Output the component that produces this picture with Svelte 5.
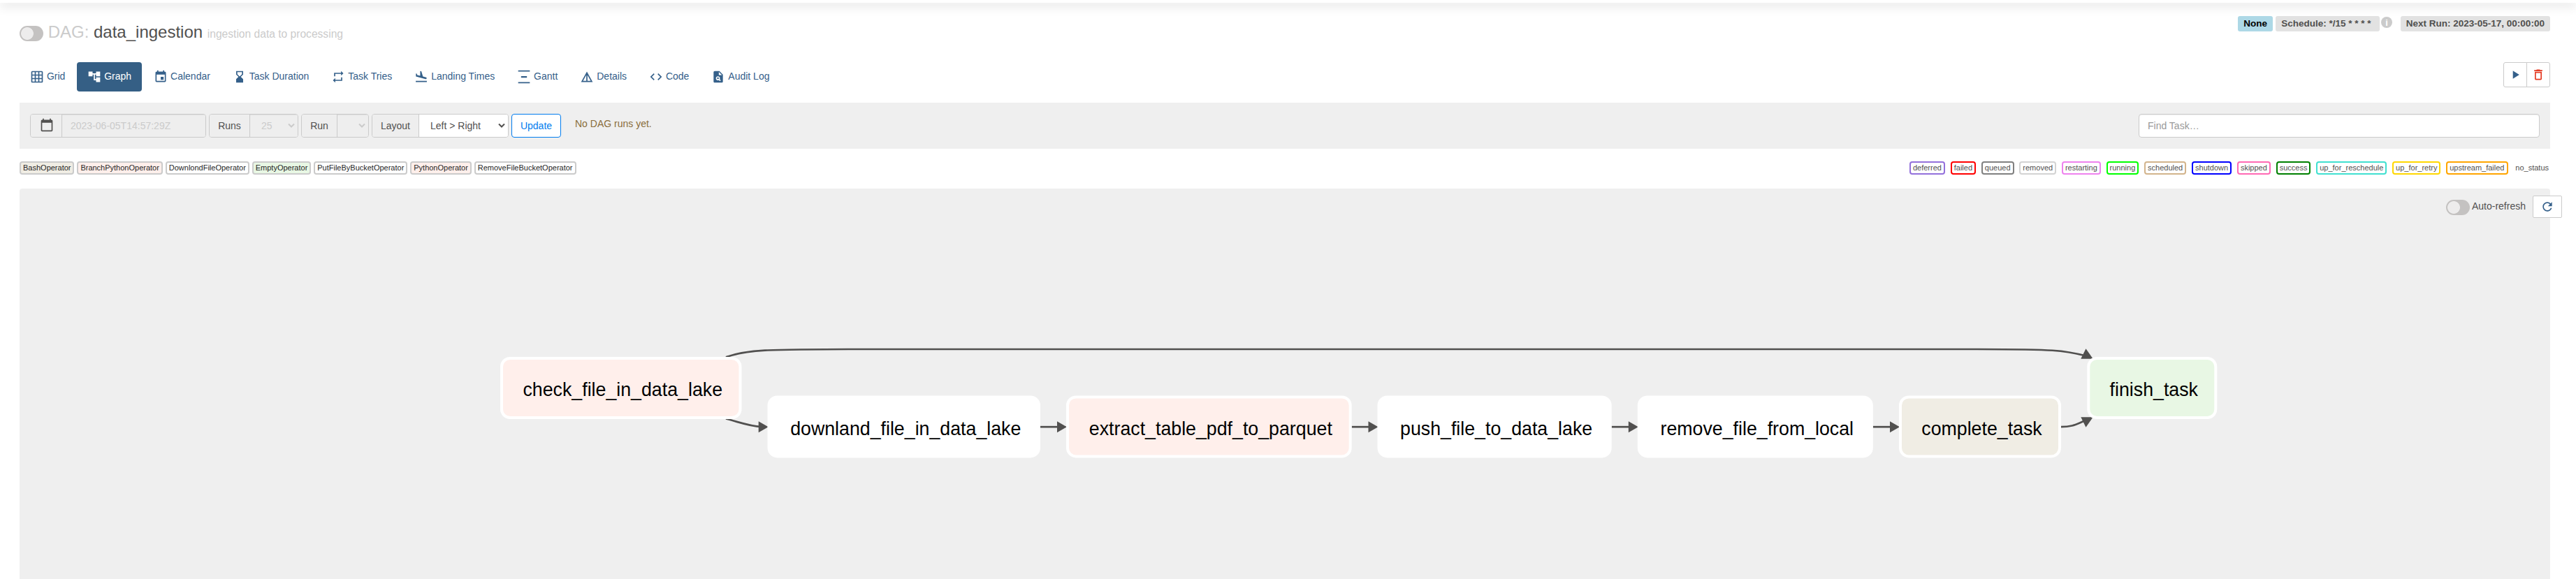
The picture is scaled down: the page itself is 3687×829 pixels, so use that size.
<script>
  const tabs = [
    { label: 'Grid', icon: 'M20 2H4c-1.1 0-2 .9-2 2v16c0 1.1.9 2 2 2h16c1.1 0 2-.9 2-2V4c0-1.1-.9-2-2-2zM8 20H4v-4h4v4zm0-6H4v-4h4v4zm0-6H4V4h4v4zm6 12h-4v-4h4v4zm0-6h-4v-4h4v4zm0-6h-4V4h4v4zm6 12h-4v-4h4v4zm0-6h-4v-4h4v4zm0-6h-4V4h4v4z' },
    { label: 'Graph', active: true, icon: 'M22 11V3h-7v3H9V3H2v8h7V8h2v10h4v3h7v-8h-7v3h-2V8h2v3z' },
    { label: 'Calendar', icon: 'M17 12h-5v5h5v-5zM16 1v2H8V1H6v2H5c-1.11 0-1.99.9-1.99 2L3 19c0 1.1.89 2 2 2h14c1.1 0 2-.9 2-2V5c0-1.1-.9-2-2-2h-1V1h-2zm3 18H5V8h14v11z' },
    { label: 'Task Duration', icon: 'M18 22l-.01-6L14 12l3.99-4.01L18 2H6v6l4 4-4 3.99V22h12zM8 7.5V4h8v3.5l-4 4-4-4z' },
    { label: 'Task Tries', icon: 'M7 7h10v3l4-4-4-4v3H5v6h2V7zm10 10H7v-3l-4 4 4 4v-3h12v-6h-2v4z' },
    { label: 'Landing Times', icon: 'M2.5 19h19v2h-19zm16.84-3.15c.8.21 1.62-.26 1.84-1.06.21-.8-.26-1.62-1.06-1.84l-5.31-1.42-2.76-9.02L10.12 2v8.28L5.15 8.95l-.93-2.32-1.45-.39v5.17l16.57 4.44z' },
    { label: 'Gantt', icon: 'M2 1h20v2H2zM7 10.7h10v2.8H7zM2 21h20v2H2z' },
    { label: 'Details', icon: 'M12 3L2 21h20L12 3zm1 5.92L18.6 19H13V8.92zm-2 0V19H5.4L11 8.92z' },
    { label: 'Code', icon: 'M9.4 16.6L4.8 12l4.6-4.6L8 6l-6 6 6 6 1.4-1.4zm5.2 0l4.6-4.6-4.6-4.6L16 6l6 6-6 6-1.4-1.4z' },
    { label: 'Audit Log', icon: 'M14 2H6c-1.1 0-1.99.9-1.99 2L4 20c0 1.1.89 2 1.99 2H18c1.1 0 2-.9 2-2V8l-6-6zm1.04 17.45l-1.88-1.88c-1.33.71-3.01.53-4.13-.59-1.37-1.37-1.37-3.58 0-4.95 1.37-1.37 3.58-1.37 4.95 0 1.12 1.12 1.31 2.8.59 4.13l1.88 1.88-1.41 1.41zM13 9V3.5L18.5 9H13zM11.5 13a1.5 1.5 0 1 0 0 3a1.5 1.5 0 1 0 0-3z' }
  ];
  const operators = [
    ['BashOperator', '#f0ede4'], ['BranchPythonOperator', '#ffefeb'], ['DownlondFileOperator', '#fff'],
    ['EmptyOperator', '#e8f7e4'], ['PutFileByBucketOperator', '#fff'], ['PythonOperator', '#ffefeb'],
    ['RemoveFileBucketOperator', '#fff']
  ];
  const states = [
    ['deferred', 'mediumpurple'], ['failed', 'red'], ['queued', 'gray'], ['removed', 'lightgrey'],
    ['restarting', 'violet'], ['running', 'lime'], ['scheduled', 'tan'], ['shutdown', 'blue'],
    ['skipped', 'hotpink'], ['success', 'green'], ['up_for_reschedule', 'turquoise'],
    ['up_for_retry', 'gold'], ['upstream_failed', 'orange']
  ];
  const nodes = [
    { label: 'check_file_in_data_lake', x: 716, y: 511, w: 345.5, fill: '#ffefeb' },
    { label: 'downland_file_in_data_lake', x: 1098.5, y: 566.4, w: 390.5, fill: '#fff' },
    { label: 'extract_table_pdf_to_parquet', x: 1526, y: 566.4, w: 408.7, fill: '#ffefeb' },
    { label: 'push_file_to_data_lake', x: 1971.5, y: 566.4, w: 335.2, fill: '#fff' },
    { label: 'remove_file_from_local', x: 2343.8, y: 566.4, w: 337, fill: '#fff' },
    { label: 'complete_task', x: 2718, y: 566.4, w: 232, fill: '#f0ede4' },
    { label: 'finish_task', x: 2987.3, y: 511, w: 186, fill: '#e8f7e4' }
  ];
  const links = [[1489, 1526], [1934.7, 1971.5], [2306.7, 2343.8], [2680.8, 2718]];
</script>

{#snippet glyph(d, size)}
  <svg class="glyph" width={size} height={size} viewBox="0 0 24 24"><path {d} fill="currentColor" /></svg>
{/snippet}

{#snippet chevron()}
  <svg class="chevron" width="10" height="8" viewBox="0 0 10 8"><path d="M1 1.5l4 4 4-4" fill="none" stroke="currentColor" stroke-width="2" /></svg>
{/snippet}

<div class="navbar"></div>
<main>
  <header>
    <h3>
      <span class="switch"></span>
      <span class="muted">DAG:</span>
      <span>data_ingestion</span>
      <small>ingestion data to processing</small>
    </h3>
    <div class="labels">
      <span class="label none">None</span>
      <span class="label schedule">Schedule: */15 * * * *</span>
      <span class="info">i</span>
      <span class="label">Next Run: 2023-05-17, 00:00:00</span>
    </div>
  </header>

  <div class="tabrow">
    <nav>
      {#each tabs as t}
        <a class:active={t.active}>{@render glyph(t.icon, 20)}<span>{t.label}</span></a>
      {/each}
    </nav>
    <div class="actions">
      <button class="play">{@render glyph('M8 5v14l11-7z', 20)}</button>
      <button class="trash">{@render glyph('M16 9v10H8V9h8m-1.5-6h-5l-1 1H5v2h14V4h-3.5l-1-1zM18 7H6v12c0 1.1.9 2 2 2h8c1.1 0 2-.9 2-2V7z', 20)}</button>
    </div>
  </div>

  <section class="filters">
    <div class="group date">
      <span class="addon">{@render glyph('M20 3h-1V1h-2v2H7V1H5v2H4c-1.1 0-2 .9-2 2v16c0 1.1.9 2 2 2h16c1.1 0 2-.9 2-2V5c0-1.1-.9-2-2-2zm0 18H4V8h16v13z', 20)}</span>
      <span class="field off">2023-06-05T14:57:29Z</span>
    </div>
    <div class="group runs"><span class="addon">Runs</span><span class="field off">25{@render chevron()}</span></div>
    <div class="group run"><span class="addon">Run</span><span class="field off">{@render chevron()}</span></div>
    <div class="group layout"><span class="addon">Layout</span><span class="field">Left &gt; Right{@render chevron()}</span></div>
    <button class="update">Update</button>
    <span class="warning">No DAG runs yet.</span>
    <div class="search">Find Task…</div>
  </section>

  <section class="legend">
    <div class="ops">
      {#each operators as [name, color]}
        <span class="tag op" style:background={color}>{name}</span>
      {/each}
    </div>
    <div class="states">
      {#each states as [name, color]}
        <span class="tag" style:border-color={color}>{name}</span>
      {/each}
      <span class="tag plain">no_status</span>
    </div>
  </section>

  <section class="graph">
    <div class="refresh">
      <span class="switch"></span>
      <span class="auto">Auto-refresh</span>
      <button>{@render glyph('M17.65 6.35C16.2 4.9 14.21 4 12 4c-4.42 0-7.99 3.58-7.99 8s3.57 8 7.99 8c3.73 0 6.84-2.55 7.73-6h-2.08c-.82 2.33-3.04 4-5.65 4-3.31 0-6-2.69-6-6s2.69-6 6-6c1.66 0 3.14.69 4.22 1.78L13 11h7V4l-2.35 2.35z', 20)}</button>
    </div>
    <svg class="dag" width="3622" height="559" viewBox="28 270 3622 559">
      <g class="edges">
        <path d="M1039 511.3C1070 500.3 1100 500.3 1216 500H2830C2940 500.3 2955 501 2987 510" />
        <path d="M1039 599.5C1060 605 1072 610 1090 611.2" />
        <path d="M2950 611.2C2967 611.2 2972 607 2985 602" />
        {#each links as [a, b]}<path d="M{a} 611.2H{b - 10}" />{/each}
      </g>
      <g class="heads">
        <path d="M1085.7 603.2l14 8-14 8z" />
        <path d="M2985.5 499.2l10.2 14.5h-17.4z" />
        <path d="M2985.5 611.8l10.2-14.5h-17.4z" />
        {#each links as [, b]}<path d="M{b - 13} 603.2l14 8-14 8z" />{/each}
      </g>
      {#each nodes as n}
        <rect x={n.x + 2} y={n.y + 2} width={n.w - 4} height="85" rx="12" fill={n.fill} />
        <text x={n.x + n.w / 2 + 2.5} y={n.y + 56.3}>{n.label}</text>
      {/each}
    </svg>
  </section>
</main>

<style>
  :global(body) { background: #fff; overflow: hidden; }
  :global(#app) { height: 829px; overflow: hidden; }
  .navbar { height: 4px; background: #fff; box-shadow: 0 3px 15px rgba(0, 0, 0, .25); position: relative; }
  main { box-sizing: border-box; width: 3650px; height: 825px; padding-left: 28px; font: 14px/20px "Liberation Sans", Arial, sans-serif; color: #51504f; }
  .glyph { display: block; flex: none; }
  header { display: flex; justify-content: space-between; height: 85px; }
  h3 { display: flex; align-items: baseline; gap: 6.67px; margin: 28px 0 0; font-size: 24px; line-height: 28px; font-weight: 400; height: 28px; }
  h3 small { font-size: 15.6px; color: #cbcbcb; }
  .muted { color: #cbcbcb; }
  .switch { box-sizing: border-box; width: 34px; height: 22px; border-radius: 11px; background: radial-gradient(circle at 11px 11px, #edecec 8.5px, #c4c2c1 9.3px); flex: none; }
  h3 .switch { align-self: flex-start; margin-top: 5px; }
  .labels { display: flex; margin-top: 19px; height: 22px; }
  .label { box-sizing: border-box; height: 22px; padding: 0 8.1px; border-radius: 3px; background: #e2e2e2; font-size: 13.5px; line-height: 21px; font-weight: 700; white-space: pre; }
  .none { background: lightblue; color: #000; margin-right: 4.5px; padding: 0 7.8px; }
  .schedule { width: 149px; }
  .info { width: 16.5px; height: 16.5px; margin: .5px 11.5px 0 1.5px; border-radius: 50%; background: #cbcbcb; color: #fff; font-size: 13px; line-height: 17px; font-weight: 700; text-align: center; }
  .tabrow { display: flex; justify-content: space-between; height: 58px; }
  nav { display: flex; gap: 2px; height: 42px; }
  nav a { display: flex; align-items: center; gap: 3.9px; padding: 0 15px; border-radius: 4px; color: #35608a; white-space: pre; }
  nav a span { margin-top: -2px; }
  nav a.active { background: #355f85; color: #fff; }
  button { box-sizing: border-box; display: flex; align-items: center; justify-content: center; padding: 0; background: #fff; border: 1px solid #cbcbcb; font: inherit; color: #35608a; }
  .actions { display: flex; height: 36px; }
  .actions button { width: 34px; }
  .play { border-radius: 3px 0 0 3px; }
  .trash { margin-left: -1px; border-radius: 0 3px 3px 0; color: #e43921; }
  .filters { box-sizing: border-box; display: flex; gap: 4px; height: 66px; padding: 16px 15px; background: #efefef; }
  .group { box-sizing: border-box; display: flex; height: 34px; border: 1px solid #cbcbcb; border-radius: 4px; background: #efefef; line-height: 32px; overflow: hidden; }
  .addon { box-sizing: border-box; flex: none; display: flex; align-items: center; justify-content: center; border-right: 1px solid #cbcbcb; background: #eee; }
  .date .addon { padding: 0 0 2px 1px; }
  .field { flex: 1; display: flex; align-items: center; justify-content: space-between; padding: 0 4px 0 16px; background: #fff; white-space: pre; }
  .off { background: #eee; color: #cbcbcb; box-shadow: inset 0 1px 1px rgba(0, 0, 0, .075); }
  .chevron { margin-left: auto; }
  .date { width: 252px; }
  .date .addon { width: 45px; }
  .date .field { padding-left: 12px; }
  .runs { width: 128px; }
  .runs .addon { width: 58px; }
  .run { width: 97px; }
  .run .addon { width: 51px; }
  .layout { width: 196px; }
  .layout .addon { width: 67px; }
  .update { width: 71px; height: 34px; border-color: #017cee; border-radius: 4px; color: #017cee; }
  .warning { margin: 4px 0 0 16px; color: #8a6d3b; }
  .search { box-sizing: border-box; width: 574px; height: 34px; margin-left: auto; padding: 0 12px; border: 1px solid #cbcbcb; border-radius: 4px; background: #fff; box-shadow: inset 0 1px 1px rgba(0, 0, 0, .075); line-height: 32px; color: #999; }
  .legend { display: flex; justify-content: space-between; height: 57px; padding-top: 18px; box-sizing: border-box; }
  .ops { display: flex; gap: 3.9px; }
  .states { display: flex; gap: 7.8px; }
  .tag { box-sizing: border-box; height: 19px; padding: 0 3px; border: 2px solid; border-radius: 4px; font-size: 11px; line-height: 15px; white-space: pre; }
  .op { border-color: #cbcbcb; color: #1f1f1f; }
  .plain { border-color: transparent; border-width: 2px 0; padding-right: 2px; }
  .graph { position: relative; height: 559px; background: #efefef; border-radius: 4px 4px 0 0; }
  .dag { display: block; }
  .refresh { position: absolute; z-index: 1; right: -17px; top: 10px; display: flex; align-items: flex-start; }
  .refresh .switch { margin-top: 6px; }
  .auto { margin: 5px 10px 0 3px; }
  .refresh button { width: 42px; height: 32px; border-radius: 2px; }
  rect { stroke: #fff; stroke-width: 4; }
  text { font-size: 26.75px; text-anchor: middle; fill: #000; }
  .edges path { fill: none; stroke: #51504f; stroke-width: 2.7; }
  .heads path { fill: #51504f; }
</style>
